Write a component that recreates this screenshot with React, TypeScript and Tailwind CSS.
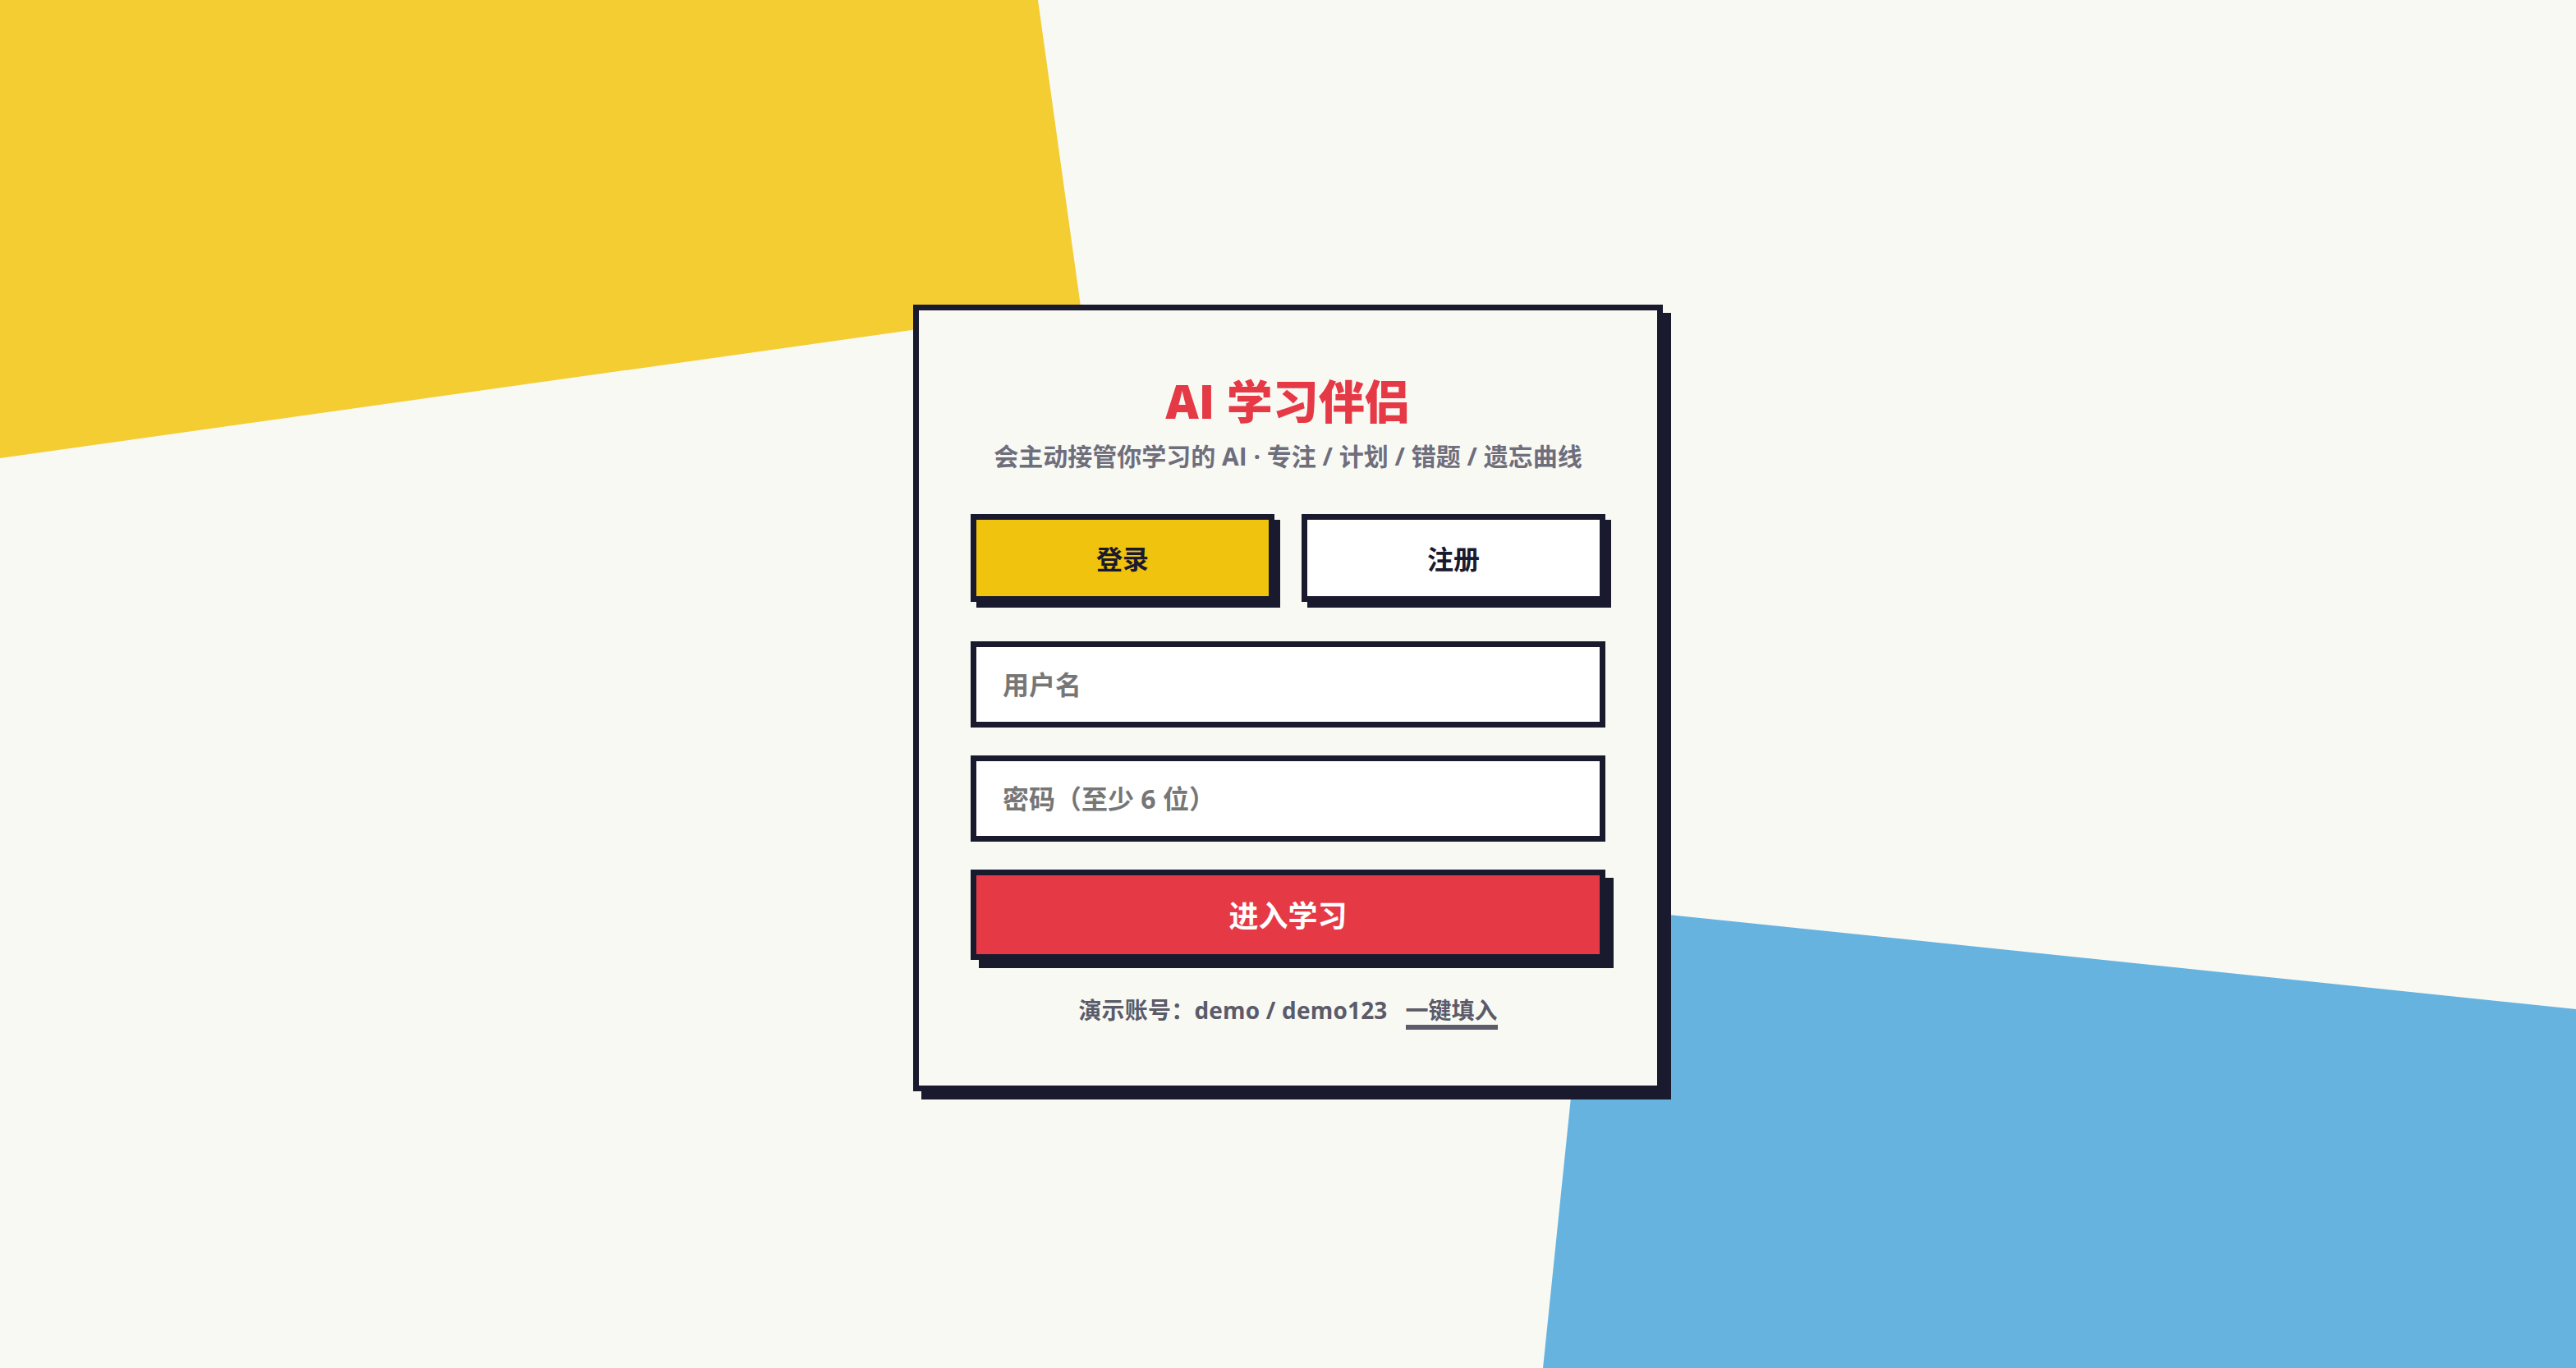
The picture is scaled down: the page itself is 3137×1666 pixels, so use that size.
import { useState } from "react";

const ink = "#1a1a2e";

function Tab({ label, active, onClick }: { label: string; active: boolean; onClick: () => void }) {
  return (
    <button
      type="button"
      onClick={onClick}
      className={
        "h-[107px] pt-[3px] border-[7px] border-[#1a1a2e] shadow-[7px_7px_0_#1a1a2e] text-[32px] leading-none font-bold text-[#1a1a2e] " +
        (active ? "bg-[#f0c30f]" : "bg-white")
      }
    >
      {label}
    </button>
  );
}

function Field({ placeholder, type = "text", value, onChange }: { placeholder: string; type?: string; value: string; onChange: (v: string) => void }) {
  return (
    <input
      type={type}
      value={value}
      onChange={(e) => onChange(e.target.value)}
      placeholder={placeholder}
      className="block w-full h-[105px] border-[7px] border-[#1a1a2e] bg-white px-[32px] text-[32px] font-bold text-[#1a1a2e] outline-none placeholder:text-[#767676] placeholder:font-bold"
    />
  );
}

export default function App() {
  const [mode, setMode] = useState<"login" | "register">("login");
  const [user, setUser] = useState("");
  const [pass, setPass] = useState("");

  return (
    <div
      className="relative w-full h-[1666px] overflow-hidden bg-[#f9f9f4]"
      style={{ fontFamily: '"Open Sans", "Noto Sans CJK SC", sans-serif', color: ink }}
    >
      {/* background shapes */}
      <div className="absolute inset-0 bg-[#f4cd33] [clip-path:polygon(0_0,1264px_0,1316px_373px,0_558px)]" />
      <div className="absolute inset-0 bg-[#66b3e0] [clip-path:polygon(1937px_1104px,100%_1229px,100%_100%,1879px_100%)]" />

      <div className="relative flex justify-center pt-[371px]">
        <div className="w-[913px] border-[7px] border-[#1a1a2e] bg-[#f9f9f4] shadow-[10px_10px_0_#1a1a2e] px-[63px] pt-[76px] pb-[68px]">
          <h1 className="text-center text-[56px] leading-[68px] font-black text-[#e63946]">AI 学习伴侣</h1>
          <p className="mt-[14px] text-center text-[30px] leading-[40px] font-bold text-[#6e6e7c]">
            会主动接管你学习的 AI · 专注 / 计划 / 错题 / 遗忘曲线
          </p>

          <div className="mt-[50px] grid grid-cols-2 gap-[33px]">
            <Tab label="登录" active={mode === "login"} onClick={() => setMode("login")} />
            <Tab label="注册" active={mode === "register"} onClick={() => setMode("register")} />
          </div>

          <div className="mt-[48px] flex flex-col gap-[34px]">
            <Field placeholder="用户名" value={user} onChange={setUser} />
            <Field placeholder="密码（至少 6 位）" type="password" value={pass} onChange={setPass} />
            <button
              type="button"
              className="h-[110px] pt-[4px] border-[7px] border-[#1a1a2e] bg-[#e63946] shadow-[10px_10px_0_#1a1a2e] text-[36px] leading-none font-bold text-white"
            >
              进入学习
            </button>
          </div>

          <div className="mt-[43px] flex justify-center items-baseline gap-[22px] text-[28px] leading-[36px] font-bold text-[#5b5b69]">
            <span className="tracking-[0.2px]">演示账号：demo / demo123</span>
            <button
              type="button"
              onClick={() => {
                setUser("demo");
                setPass("demo123");
              }}
              className="border-b-[6px] border-[#5b5b69] leading-[36px] font-bold"
            >
              一键填入
            </button>
          </div>
        </div>
      </div>
    </div>
  );
}
